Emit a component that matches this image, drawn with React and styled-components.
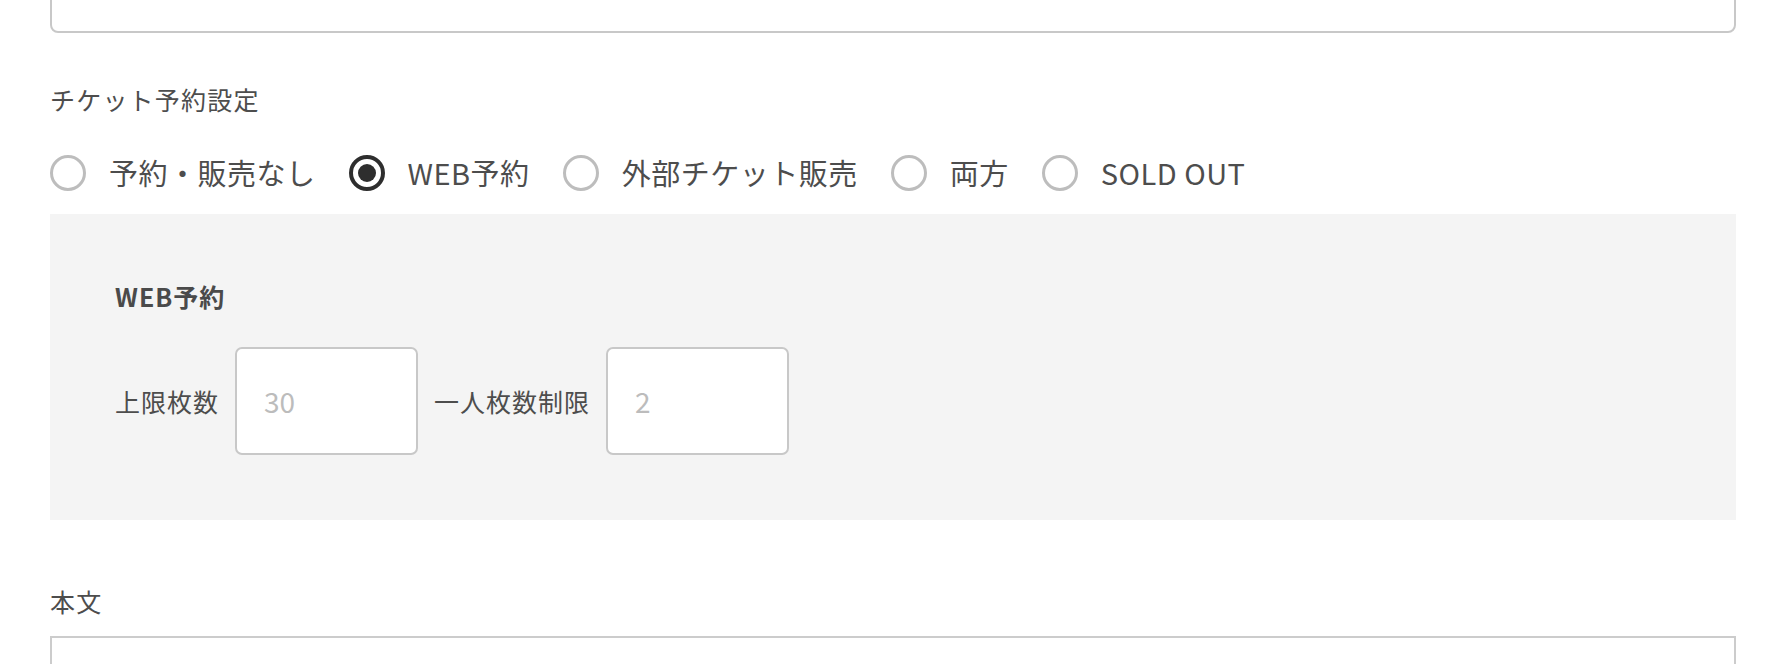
import React, { useState } from "react";
import styled, { createGlobalStyle } from "styled-components";

const GlobalStyle = createGlobalStyle`
  html, body {
    margin: 0;
    padding: 0;
    background: #fff;
  }
  body {
    font-family: "Noto Sans CJK JP", "Noto Sans", sans-serif;
    color: #4d4d4d;
    overflow: hidden;
  }
`;

const OPTIONS = ["予約・販売なし", "WEB予約", "外部チケット販売", "両方", "SOLD OUT"];

const App = () => {
  const [selected, setSelected] = useState("WEB予約");

  return (
    <>
      <GlobalStyle />
      <Page>
        <TopField />

        <FieldLabel className="ticket-label">チケット予約設定</FieldLabel>
        <RadioRow>
          {OPTIONS.map((opt) => (
            <RadioItem key={opt} onClick={() => setSelected(opt)}>
              <RadioCircle checked={selected === opt} />
              <RadioText>{opt}</RadioText>
            </RadioItem>
          ))}
        </RadioRow>

        <SettingPanel>
          <PanelTitle>WEB予約</PanelTitle>
          <PanelRow>
            <InlineLabel>上限枚数</InlineLabel>
            <NumberInput placeholder="30" />
            <InlineLabel>一人枚数制限</InlineLabel>
            <NumberInput placeholder="2" />
          </PanelRow>
        </SettingPanel>

        <FieldLabel className="body-label">本文</FieldLabel>
        <BodyEditor />
      </Page>
    </>
  );
};

const Page = styled.div`
  padding: 0 50px;
  display: flex;
  flex-direction: column;
`;

const TopField = styled.div`
  height: 60px;
  margin-top: -27px;
  box-sizing: border-box;
  border: 2px solid #c8c8c8;
  border-radius: 8px;
  background: #fff;
`;

const FieldLabel = styled.div`
  font-size: 25px;
  line-height: 36px;
  letter-spacing: 1.2px;
  color: #4d4d4d;
  &.ticket-label {
    margin-top: 48px;
  }
  &.body-label {
    margin-top: 63px;
  }
`;

const RadioRow = styled.div`
  display: flex;
  align-items: center;
  gap: 33px;
  margin-top: 37px;
  height: 37px;
`;

const RadioItem = styled.label`
  display: flex;
  align-items: center;
  gap: 23px;
  cursor: pointer;
`;

const RadioCircle = styled.span`
  width: 36px;
  height: 36px;
  box-sizing: border-box;
  border-radius: 50%;
  border: ${(props) => (props.checked ? "4px solid #2e2e2e" : "3px solid #bdbdbd")};
  display: flex;
  align-items: center;
  justify-content: center;
  flex-shrink: 0;
  &::after {
    content: "";
    display: ${(props) => (props.checked ? "block" : "none")};
    width: 18px;
    height: 18px;
    border-radius: 50%;
    background: #2e2e2e;
  }
`;

const RadioText = styled.span`
  font-size: 29px;
  line-height: 37px;
  letter-spacing: 0.5px;
  color: #4d4d4d;
  white-space: nowrap;
`;

const SettingPanel = styled.div`
  margin-top: 23px;
  background: #f4f4f4;
  padding: 64px 65px 65px;
  display: flex;
  flex-direction: column;
  gap: 33px;
`;

const PanelTitle = styled.div`
  font-size: 25px;
  line-height: 36px;
  font-weight: 700;
  letter-spacing: 1px;
  color: #4a4a4a;
`;

const PanelRow = styled.div`
  display: flex;
  align-items: center;
  gap: 16px;
`;

const InlineLabel = styled.span`
  font-size: 25px;
  letter-spacing: 1px;
  color: #4d4d4d;
  white-space: nowrap;
`;

const NumberInput = styled.input`
  width: 183px;
  height: 108px;
  box-sizing: border-box;
  border: 2px solid #c8c8c8;
  border-radius: 7px;
  background: #fff;
  padding: 0 27px;
  font-family: inherit;
  font-size: 28px;
  color: #4d4d4d;
  outline: none;
  &::placeholder {
    color: #bcbcbc;
  }
`;

const BodyEditor = styled.div`
  margin-top: 17px;
  height: 80px;
  box-sizing: border-box;
  border: 2px solid #cccccc;
  background: #fff;
`;

export default App;
